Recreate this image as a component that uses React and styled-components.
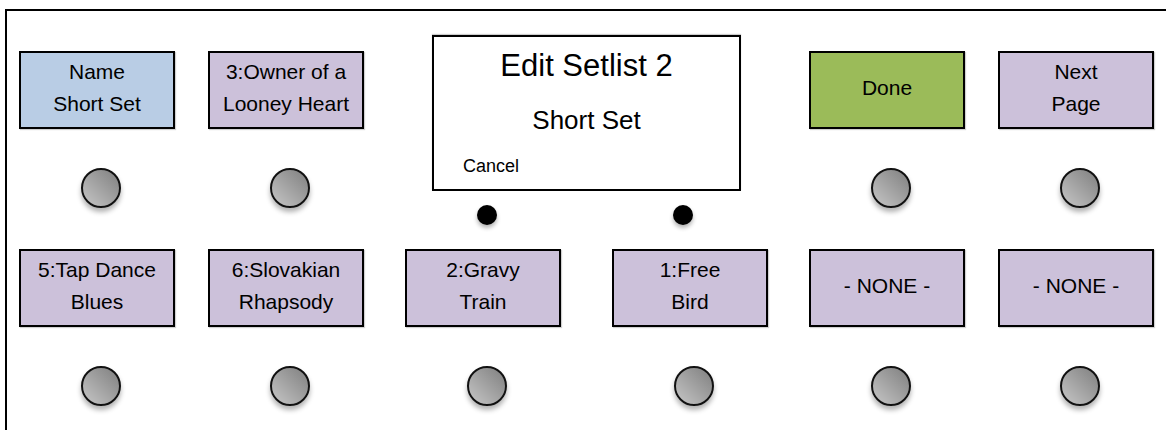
import React from "react";
import styled, { createGlobalStyle } from "styled-components";

const Global = createGlobalStyle`
  html, body { margin: 0; padding: 0; background: #fff; overflow: hidden; }
  body { font-family: "Liberation Sans", Arial, sans-serif; color: #000; }
`;

const Frame = styled.div`
  margin: 9px 0 0 5px;
  width: 1300px;
  height: 520px;
  border: 2px solid #000;
  box-sizing: border-box;
  padding: 40px 0 0 12px;
`;

const Row = styled.div`
  display: flex;
  align-items: flex-start;
  margin-top: ${(p) => p.$mt || 0}px;
`;

const Column = styled.div`
  width: 156px;
  margin-left: ${(p) => p.$ml || 0}px;
  display: flex;
  flex-direction: column;
  align-items: center;
`;

const colors = {
  blue: "#b9cde5",
  purple: "#ccc1da",
  green: "#9bbb59",
};

const Pad = styled.div`
  width: 156px;
  height: ${(p) => p.$h || 78}px;
  box-sizing: border-box;
  border: 2px solid #000;
  background: ${(p) => colors[p.$color || "purple"]};
  box-shadow: 1px 1px 1px rgba(0, 0, 0, 0.18);
  display: flex;
  flex-direction: column;
  justify-content: center;
  align-items: center;
  text-align: center;
  font-size: 21px;
  line-height: 32px;
  padding-bottom: 4px;
`;

const Knob = styled.div`
  width: 40px;
  height: 40px;
  box-sizing: border-box;
  margin: 39px 0 0 8px;
  border-radius: 50%;
  border: 2px solid #111;
  background: linear-gradient(45deg, #c6c6c6 0%, #a2a2a2 50%, #7f7f7f 100%);
  box-shadow: 0 4px 5px rgba(0, 0, 0, 0.3);
`;

const ScreenColumn = styled.div`
  margin: -16px 0 0 68px;
  display: flex;
  flex-direction: column;
`;

const Screen = styled.div`
  width: 309px;
  height: 156px;
  box-sizing: border-box;
  border: 2px solid #000;
  background: #fff;
  box-shadow: 0 -1px 1px rgba(0, 0, 0, 0.2);
  display: flex;
  flex-direction: column;
  align-items: center;
  padding-top: 11px;
`;

const Title = styled.div`
  font-size: 31px;
  line-height: 36px;
`;

const Subtitle = styled.div`
  font-size: 26px;
  line-height: 30px;
  margin-top: 21px;
`;

const Cancel = styled.div`
  align-self: flex-start;
  font-size: 18px;
  line-height: 21px;
  margin: 21px 0 0 29px;
`;

const Dots = styled.div`
  display: flex;
  gap: 176px;
  padding-left: 45px;
  margin-top: 14px;
`;

const Dot = styled.div`
  width: 20px;
  height: 20px;
  border-radius: 50%;
  background: #000;
  box-shadow: 0 3px 4px rgba(0, 0, 0, 0.3);
`;

function Control({ ml, color, children }) {
  return (
    <Column $ml={ml}>
      <Pad $color={color}>{children}</Pad>
      <Knob />
    </Column>
  );
}

const L = ({ children }) => <div>{children}</div>;

export default function App() {
  return (
    <>
      <Global />
      <Frame>
        <Row>
          <Control color="blue">
            <L>Name</L>
            <L>Short Set</L>
          </Control>
          <Control ml={33}>
            <L>3:Owner of a</L>
            <L>Looney Heart</L>
          </Control>
          <ScreenColumn>
            <Screen>
              <Title>Edit Setlist 2</Title>
              <Subtitle>Short Set</Subtitle>
              <Cancel>Cancel</Cancel>
            </Screen>
            <Dots>
              <Dot />
              <Dot />
            </Dots>
          </ScreenColumn>
          <Control ml={68} color="green">
            <L>Done</L>
          </Control>
          <Control ml={33}>
            <L>Next</L>
            <L>Page</L>
          </Control>
        </Row>
        <Row $mt={24}>
          <Control>
            <L>5:Tap Dance</L>
            <L>Blues</L>
          </Control>
          <Control ml={33}>
            <L>6:Slovakian</L>
            <L>Rhapsody</L>
          </Control>
          <Control ml={41}>
            <L>2:Gravy</L>
            <L>Train</L>
          </Control>
          <Control ml={51}>
            <L>1:Free</L>
            <L>Bird</L>
          </Control>
          <Control ml={41}>
            <L>- NONE -</L>
          </Control>
          <Control ml={33}>
            <L>- NONE -</L>
          </Control>
        </Row>
      </Frame>
    </>
  );
}
